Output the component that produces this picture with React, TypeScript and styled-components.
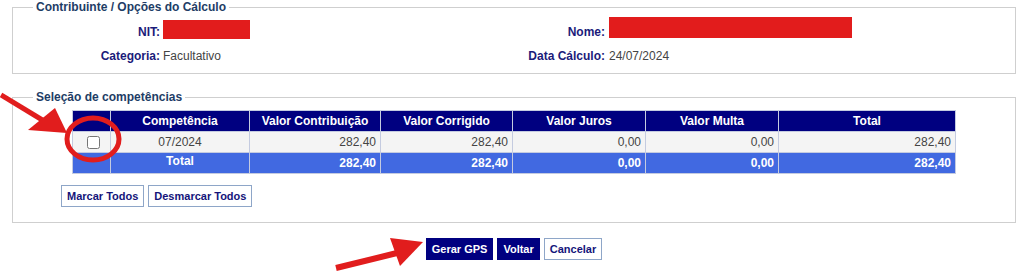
import React from "react";
import styled, { createGlobalStyle } from "styled-components";

const GlobalStyle = createGlobalStyle`
  body {
    margin: 0;
    background: #ffffff;
    font-family: "Liberation Sans", Arial, sans-serif;
  }
`;

const NAVY = "#000080";
const LABEL = "#1b1b7a";

interface Row {
  competencia: string;
  contribuicao: string;
  corrigido: string;
  juros: string;
  multa: string;
  total: string;
}

const rows: Row[] = [
  {
    competencia: "07/2024",
    contribuicao: "282,40",
    corrigido: "282,40",
    juros: "0,00",
    multa: "0,00",
    total: "282,40",
  },
];

const columns = [38, 139, 131, 132, 133, 133, 177];

export default function App() {
  return (
    <Page>
      <GlobalStyle />
      <Fieldset>
        <Legend>Contribuinte / Opções do Cálculo</Legend>
        <InfoGrid>
          <Label>NIT:</Label>
          <Value>
            <Redacted $w={87} $h={19} $top={0} />
          </Value>
          <Label>Nome:</Label>
          <Value $pad={1}>
            <Redacted $w={243} $h={21} $top={-3} />
          </Value>
          <Label>Categoria:</Label>
          <Value>Facultativo</Value>
          <Label>Data Cálculo:</Label>
          <Value $pad={1}>24/07/2024</Value>
        </InfoGrid>
      </Fieldset>

      <Fieldset $gapTop={16}>
        <Legend>Seleção de competências</Legend>
        <Grid>
          <colgroup>
            {columns.map((w, i) => (
              <col key={i} style={{ width: w }} />
            ))}
          </colgroup>
          <thead>
            <tr>
              <HeadCell />
              <HeadCell>Competência</HeadCell>
              <HeadCell>Valor Contribuição</HeadCell>
              <HeadCell>Valor Corrigido</HeadCell>
              <HeadCell>Valor Juros</HeadCell>
              <HeadCell>Valor Multa</HeadCell>
              <HeadCell>Total</HeadCell>
            </tr>
          </thead>
          <tbody>
            {rows.map((r) => (
              <tr key={r.competencia}>
                <DataCell $align="center">
                  <Check type="checkbox" />
                </DataCell>
                <DataCell $align="center">{r.competencia}</DataCell>
                <DataCell>{r.contribuicao}</DataCell>
                <DataCell>{r.corrigido}</DataCell>
                <DataCell>{r.juros}</DataCell>
                <DataCell>{r.multa}</DataCell>
                <DataCell>{r.total}</DataCell>
              </tr>
            ))}
            <tr>
              <TotalCell />
              <TotalCell $align="center" $top>
                Total
              </TotalCell>
              <TotalCell>282,40</TotalCell>
              <TotalCell>282,40</TotalCell>
              <TotalCell>0,00</TotalCell>
              <TotalCell>0,00</TotalCell>
              <TotalCell>282,40</TotalCell>
            </tr>
          </tbody>
        </Grid>
        <SelectRow>
          <Button>Marcar Todos</Button>
          <Button>Desmarcar Todos</Button>
        </SelectRow>
      </Fieldset>

      <Actions>
        <Button $primary>Gerar GPS</Button>
        <Button $primary>Voltar</Button>
        <Button>Cancelar</Button>
      </Actions>

      <Annotations width="1024" height="271" viewBox="0 0 1024 271">
        <line x1="1" y1="95" x2="44" y2="121" stroke="#e11d1d" strokeWidth="5" />
        <polygon points="28,130 55,108 67,133" fill="#e11d1d" />
        <ellipse
          cx="93"
          cy="139"
          rx="26"
          ry="21"
          fill="none"
          stroke="#e11d1d"
          strokeWidth="5"
        />
        <line x1="336" y1="268" x2="397" y2="253" stroke="#e11d1d" strokeWidth="6" />
        <polygon points="390,238 400,266 423,242" fill="#e11d1d" />
      </Annotations>
    </Page>
  );
}

const Page = styled.div`
  position: relative;
  width: 1024px;
  height: 271px;
  box-sizing: border-box;
  padding-left: 12px;
  overflow: hidden;
`;

const Fieldset = styled.fieldset<{ $gapTop?: number }>`
  width: 1004px;
  box-sizing: border-box;
  margin: ${(p) => p.$gapTop ?? 0}px 0 0 0;
  padding: 6px 0 5px 0;
  border: 1px solid #cfcfcf;
  min-width: 0;
  & + & {
    padding-bottom: 15px;
  }
`;

const Legend = styled.legend`
  margin-left: 20px;
  padding: 0 3px;
  font-size: 12px;
  line-height: 14px;
  font-weight: bold;
  color: #1e3d66;
`;

const InfoGrid = styled.div`
  display: grid;
  grid-template-columns: 150px 354px 91px 1fr;
  grid-auto-rows: 24px;
  align-items: center;
  font-size: 12px;
`;

const Label = styled.div`
  text-align: right;
  padding-right: 3px;
  font-weight: bold;
  color: ${LABEL};
`;

const Value = styled.div<{ $pad?: number }>`
  display: flex;
  align-items: center;
  height: 100%;
  padding-left: ${(p) => p.$pad ?? 0}px;
  color: #444444;
`;

const Redacted = styled.span<{ $w: number; $h: number; $top: number }>`
  display: block;
  align-self: flex-start;
  width: ${(p) => p.$w}px;
  height: ${(p) => p.$h}px;
  margin-top: ${(p) => p.$top}px;
  background: #e21c1c;
`;

const Grid = styled.table`
  width: 883px;
  margin: 0 auto;
  border-collapse: collapse;
  table-layout: fixed;
  font-size: 12px;
`;

const cellBase = `
  height: 20px;
  padding: 0 4px;
  line-height: 20px;
  border: 1px solid #c4cbe0;
  white-space: nowrap;
  overflow: hidden;
  box-sizing: border-box;
`;

const HeadCell = styled.th`
  ${cellBase}
  background: ${NAVY};
  color: #ffffff;
  font-weight: bold;
  text-align: center;
`;

const DataCell = styled.td<{ $align?: string }>`
  ${cellBase}
  background: #f4f4f4;
  color: #444444;
  text-align: ${(p) => p.$align ?? "right"};
`;

const TotalCell = styled.td<{ $align?: string; $top?: boolean }>`
  ${cellBase}
  background: #4169e1;
  color: #ffffff;
  font-weight: bold;
  text-align: ${(p) => p.$align ?? "right"};
  vertical-align: ${(p) => (p.$top ? "top" : "middle")};
  line-height: ${(p) => (p.$top ? "16px" : "20px")};
`;

const Check = styled.input`
  width: 13px;
  height: 13px;
  margin: 0 0 0 3px;
  vertical-align: middle;
`;

const SelectRow = styled.div`
  display: flex;
  gap: 4px;
  margin-top: 11px;
  padding-left: 48px;
`;

const Button = styled.button<{ $primary?: boolean }>`
  height: 22px;
  padding: 0 5px;
  font-family: "Liberation Sans", Arial, sans-serif;
  font-size: 11px;
  font-weight: bold;
  border: 1px solid ${(p) => (p.$primary ? NAVY : "#8ea6c8")};
  background: ${(p) => (p.$primary ? NAVY : "#ffffff")};
  color: ${(p) => (p.$primary ? "#ffffff" : "#14147a")};
  border-radius: 0;
  cursor: pointer;
`;

const Actions = styled.div`
  display: flex;
  justify-content: center;
  gap: 4px;
  width: 1004px;
  margin-top: 15px;
`;

const Annotations = styled.svg`
  position: absolute;
  left: 0;
  top: 0;
  pointer-events: none;
`;
